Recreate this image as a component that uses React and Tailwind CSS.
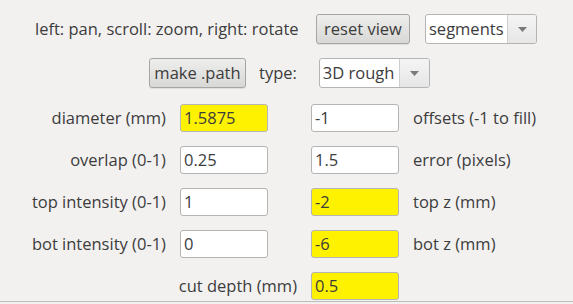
import React from "react";

const font = { fontFamily: '"Open Sans", "DejaVu Sans", sans-serif' };

const Field = ({ value, yellow }) => (
  <div
    className={`w-[88px] h-[28px] rounded-[3px] border border-[#b4b4b4] flex items-center pl-[3px] text-[16.5px] text-[#3c3c3c] ${
      yellow ? "bg-[#fff200]" : "bg-white"
    }`}
  >
    {value}
  </div>
);

const Select = ({ value, width, split }) => (
  <div
    className="h-[30px] rounded-[3px] border border-[#b4b4b4] flex overflow-hidden bg-white"
    style={{ width }}
  >
    <div className="flex items-center pl-[3px] text-[16.5px] text-[#3c3c3c] overflow-hidden whitespace-nowrap" style={{ width: split }}>
      {value}
    </div>
    <div className="flex-1 border-l border-[#cfcfcf] bg-gradient-to-b from-[#f4f4f4] to-[#e6e6e6] flex items-center justify-center">
      <svg width="9" height="5" viewBox="0 0 9 5">
        <path d="M0 0 L9 0 L4.5 5 Z" fill="#7a7a7a" />
      </svg>
    </div>
  </div>
);

const Button = ({ children, className }) => (
  <div
    className={`h-[30px] rounded-[3px] border border-[#a5a5a5] bg-gradient-to-b from-[#eeeeec] to-[#d8d8d6] flex items-center justify-center text-[16.5px] text-[#3c3c3c] shadow-[0_1px_0_rgba(0,0,0,0.08)] whitespace-nowrap ${className}`}
  >
    {children}
  </div>
);

const rows = [
  { l: "diameter (mm)", a: "1.5875", ay: true, b: "-1", by: false, r: "offsets (-1 to fill)" },
  { l: "overlap (0-1)", a: "0.25", ay: false, b: "1.5", by: false, r: "error (pixels)" },
  { l: "top intensity (0-1)", a: "1", ay: false, b: "-2", by: true, r: "top z (mm)" },
  { l: "bot intensity (0-1)", a: "0", ay: false, b: "-6", by: true, r: "bot z (mm)" },
];

export default function App() {
  return (
    <div className="w-[573px] h-[304px] bg-[#f2f1f0] overflow-hidden text-[#3c3c3c]" style={font}>
      <div className="h-[302px] border-b border-[#bdbdbd] pt-[14px]">
        {/* top controls */}
        <div className="flex items-center h-[30px]">
          <span className="ml-[35px] w-[267px] text-[16.5px] whitespace-nowrap">
            left: pan, scroll: zoom, right: rotate
          </span>
          <Button className="ml-[14px] w-[94px]">reset view</Button>
          <div className="ml-[15px]">
            <Select value="segments" width={112} split={81} />
          </div>
        </div>
        <div className="flex items-center h-[30px] mt-[14px]">
          <Button className="ml-[149px] w-[97px]">make .path</Button>
          <span className="ml-[13px] text-[16.5px]">type:</span>
          <div className="ml-[22px]">
            <Select value="3D rough" width={111} split={79} />
          </div>
        </div>

        {/* parameter grid */}
        <div className="mt-[16px] flex flex-col gap-[14px]">
          {rows.map((row) => (
            <div key={row.l} className="flex items-center h-[28px]">
              <span className="w-[166px] text-right text-[16.5px] whitespace-nowrap">{row.l}</span>
              <div className="ml-[14px]">
                <Field value={row.a} yellow={row.ay} />
              </div>
              <div className="ml-[43px]">
                <Field value={row.b} yellow={row.by} />
              </div>
              <span className="ml-[14px] text-[16.5px] whitespace-nowrap">{row.r}</span>
            </div>
          ))}
          <div className="flex items-center h-[28px]">
            <span className="w-[297px] text-right text-[16.5px] whitespace-nowrap">cut depth (mm)</span>
            <div className="ml-[14px]">
              <Field value="0.5" yellow />
            </div>
          </div>
        </div>
      </div>
    </div>
  );
}
